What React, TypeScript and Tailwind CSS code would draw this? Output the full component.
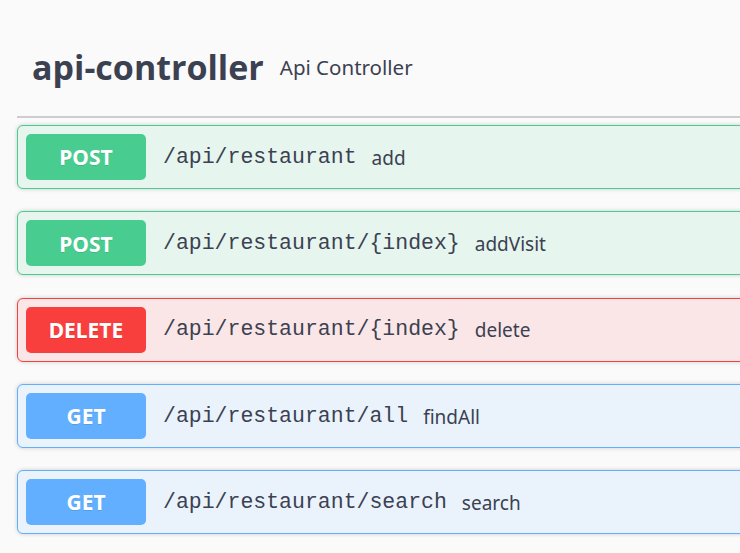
import React from "react";

type Op = { method: "POST" | "DELETE" | "GET"; path: string; desc: string };

const ops: Op[] = [
  { method: "POST", path: "/api/restaurant", desc: "add" },
  { method: "POST", path: "/api/restaurant/{index}", desc: "addVisit" },
  { method: "DELETE", path: "/api/restaurant/{index}", desc: "delete" },
  { method: "GET", path: "/api/restaurant/all", desc: "findAll" },
  { method: "GET", path: "/api/restaurant/search", desc: "search" },
];

const styles = {
  POST: { block: "bg-[#e6f5ee] border-[#49cc90]", badge: "bg-[#49cc90]" },
  DELETE: { block: "bg-[#fae6e6] border-[#f93e3e]", badge: "bg-[#f93e3e]" },
  GET: { block: "bg-[#eaf3fc] border-[#61affe]", badge: "bg-[#61affe]" },
};

export default function App() {
  return (
    <div className="w-[740px] h-[553px] overflow-hidden bg-[#fafafa] pl-[17px] text-[#3b4151]">
      <div className="flex items-center h-[96px] mt-[22px] pb-[4px] pl-[15px] border-b-2 border-[#cdcdd1]">
        <span className="text-[34px] font-bold leading-none font-['Open_Sans','Noto_Sans',sans-serif]">
          api-controller
        </span>
        <span className="ml-[16px] text-[20.5px] mt-[1px] font-['Noto_Sans','Open_Sans',sans-serif]">
          Api Controller
        </span>
      </div>
      <div className="flex flex-col gap-[22.25px] mt-[7px] w-[760px]">
        {ops.map((op, i) => (
          <div
            key={i}
            className={`h-[64px] border rounded-[6px] shadow-[0_0_4px_rgba(0,0,0,0.19)] flex items-center px-[8px] ${styles[op.method].block}`}
          >
            <div
              className={`w-[120px] h-[46px] pt-[2px] rounded-[5px] flex items-center justify-center text-white text-[21px] font-bold [text-shadow:0_1px_0_rgba(0,0,0,0.1)] font-['Noto_Sans','Open_Sans',sans-serif] ${styles[op.method].badge}`}
            >
              {op.method}
            </div>
            <span className="ml-[17px] text-[21.5px] text-[#3b4151] font-['Liberation_Mono','DejaVu_Sans_Mono',monospace]">
              {op.path}
            </span>
            <span className="ml-[15px] text-[19px] text-[#3b4151] mt-[2px] font-['Noto_Sans','Open_Sans',sans-serif]">
              {op.desc}
            </span>
          </div>
        ))}
      </div>
    </div>
  );
}
